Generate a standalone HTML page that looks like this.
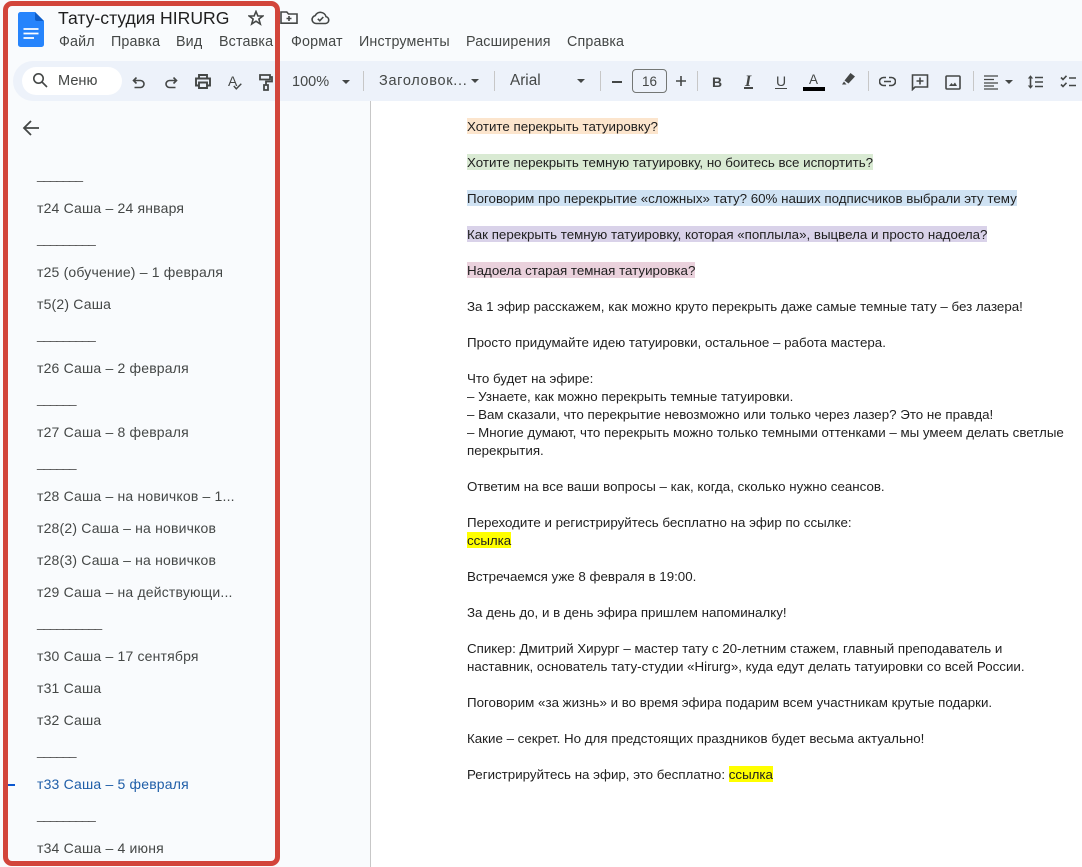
<!DOCTYPE html>
<html lang="ru"><head><meta charset="utf-8"><title>Тату-студия HIRURG</title>
<style>
html,body{margin:0;padding:0;background:#f9fbfd}
body{position:relative;width:1082px;height:867px;overflow:hidden;font-family:"Liberation Sans","Noto Sans CJK SC",sans-serif;color:#444746}
.a{position:absolute;white-space:nowrap}
#page{position:absolute;left:371px;top:101px;width:711px;height:766px;background:#fff}
#vl{position:absolute;left:370px;top:101px;width:1px;height:766px;background:#c7c7c7}
#bar{position:absolute;left:13px;top:61px;width:1069px;height:40px;background:#edf2fa;border-radius:20px 0 0 20px}
#search{position:absolute;left:22px;top:67px;width:100px;height:28px;border-radius:14px;background:#fff}
.m{top:34px;font-size:14.3px;line-height:16px;letter-spacing:.15px;color:#444746}
.t{font-size:14px;line-height:16px;color:#444746}
.s{position:absolute;left:37px;font-size:14px;line-height:18px;letter-spacing:.18px;color:#444746;white-space:nowrap}
.u{font-size:13.5px;letter-spacing:-1.1px;color:#555}
.d{position:absolute;left:467px;font-size:13.33px;line-height:18px;height:16px;margin-top:1px;color:#1f1f1f;white-space:nowrap}
.d span{display:inline-block;height:16px;vertical-align:top}
.sep{position:absolute;top:71px;width:1px;height:20px;background:#c7c7c7}
svg.i{position:absolute;fill:none;stroke:#444746;stroke-width:1.6}
#red{position:absolute;left:3px;top:1px;width:267px;height:855px;border:5px solid #d2453b;border-radius:9px;background:transparent}
</style></head><body>
<div id="page"></div><div id="vl"></div><div id="bar"></div><div id="search"></div>

<svg class="a" style="left:18px;top:12px" width="26" height="35" viewBox="0 0 26 35"><path d="M2.5 0H17L26 9V32.500A2.500 2.500 0 0 1 23.500 35H2.500A2.500 2.500 0 0 1 0 32.500V2.500A2.500 2.500 0 0 1 2.500 0Z" fill="#2684fc"/><path d="M17 0L26 9H19A2 2 0 0 1 17 7Z" fill="#0f5ec9"/><path d="M5.500 17H20.500M5.500 21.500H20.500M5.500 26H16" stroke="#fff" stroke-width="1.700"/></svg>

<div class="a" style="left:58px;top:7px;font-size:17.6px;line-height:22px;color:#1f1f1f">Тату-студия HIRURG</div>
<svg class="i" style="left:248px;top:10px" width="16" height="16" viewBox="0 0 16 16"><path d="M8 1.500L9.900 6H14.800L10.900 9L12.300 14L8 11.200L3.700 14L5.100 9L1.200 6H6.100Z"/></svg>
<svg class="i" style="left:280px;top:11px" width="18" height="14" viewBox="0 0 18 14"><path d="M1 3V12.200H17V3H8.500L6.800 1H1V3M9 5V10M6.500 7.500H11.500"/></svg>
<svg class="i" style="left:311px;top:11px" width="19" height="14" viewBox="0 0 19 14"><path d="M5 12.500H14.500A3.500 3.500 0 0 0 15 5.600A5.800 5.800 0 0 0 4.200 4.600A4 4 0 0 0 5 12.500ZM6.800 7.800L8.800 9.700L12.300 6"/></svg>

<div class="a m" style="left:59px">Файл</div><div class="a m" style="left:111px">Правка</div><div class="a m" style="left:176px">Вид</div><div class="a m" style="left:219px">Вставка</div><div class="a m" style="left:291px">Формат</div><div class="a m" style="left:359px">Инструменты</div><div class="a m" style="left:466px">Расширения</div><div class="a m" style="left:567px">Справка</div>

<svg class="i" style="left:32px;top:72px" width="16" height="16" viewBox="0 0 16 16"><circle cx="6.500" cy="6.500" r="4.700"/><path d="M10 10L15 15"/></svg>
<div class="a t" style="left:58px;top:73px;font-size:14.6px">Меню</div>
<svg class="i" style="left:132px;top:77px" width="14" height="12" viewBox="0 0 14 12"><path d="M4.500 .5L1.500 3.500L4.500 6.500M1.500 3.500H8.500A3.500 3.500 0 0 1 8.500 10.500H2.500"/></svg>
<svg class="i" style="left:164px;top:77px" width="14" height="12" viewBox="0 0 14 12"><path d="M9.500 .5L12.500 3.500L9.500 6.500M12.500 3.500H5.500A3.500 3.500 0 0 0 5.500 10.500H11.500"/></svg>
<svg class="i" style="left:195px;top:74px" width="16" height="15" viewBox="0 0 16 15"><path d="M4 4V1H12V4M4 11.500H1V4.500H15V11.500H12M4 8.500H12V14H4Z" stroke-width="1.900"/></svg>
<div class="a" style="left:228px;top:73px;font-size:14px;line-height:16px">A</div>
<svg class="i" style="left:233px;top:83px" width="9" height="7" viewBox="0 0 9 7"><path d="M.8 3L3.300 5.800L8.300 .8" stroke-width="1.400"/></svg>
<svg class="i" style="left:259px;top:74px" width="14" height="17" viewBox="0 0 14 17"><path d="M1 1H11V5.500H1ZM11 3H13V7.500H7V11M5 11H9V16H5Z" stroke-width="1.800"/></svg>

<div class="a t" style="left:292px;top:74px;font-size:14.5px">100%</div>
<div class="a" style="left:342px;top:80px;border:4px solid transparent;border-top:4.500px solid #444746;border-bottom:0"></div>
<div class="sep" style="left:363px"></div>
<div class="a t" style="left:379px;top:73px;font-size:14.5px;letter-spacing:.68px">Заголовок...</div>
<div class="a" style="left:471px;top:79px;border:4px solid transparent;border-top:4.500px solid #444746;border-bottom:0"></div>
<div class="sep" style="left:494px"></div>
<div class="a t" style="left:510px;top:73px;font-size:15.3px">Arial</div>
<div class="a" style="left:577px;top:79px;border:4px solid transparent;border-top:4.500px solid #444746;border-bottom:0"></div>
<div class="sep" style="left:600px"></div>
<div class="a" style="left:612px;top:81px;width:10px;height:1.500px;background:#444746"></div>
<div class="a" style="left:632px;top:69px;width:33px;height:22px;border:1px solid #747775;border-radius:4px;text-align:center;font-size:13.500px;line-height:23px;color:#444746">16</div>
<svg class="i" style="left:675px;top:75px" width="12" height="12" viewBox="0 0 12 12"><path d="M1 6H11M6 1V11"/></svg>
<div class="sep" style="left:697px"></div>
<div class="a" style="left:712px;top:74px;font-size:14px;line-height:16px;font-weight:bold">B</div>
<div class="a" style="left:745px;top:74px;font-size:16px;line-height:16px;font-weight:bold;font-style:italic;font-family:'Liberation Serif',serif">I</div>
<div class="a" style="left:744px;top:87px;width:9px;height:1.500px;background:#444746"></div>
<div class="a" style="left:776px;top:73px;font-size:14px;line-height:16px;">U</div><div class="a" style="left:775px;top:87.500px;width:12px;height:1.500px;background:#444746"></div>
<div class="a" style="left:809px;top:72px;font-size:13.500px;line-height:16px">A</div><div class="a" style="left:803px;top:87px;width:22px;height:4px;background:#000"></div>
<svg class="a" style="left:841px;top:72px" width="15" height="14" viewBox="0 0 15 14"><path d="M9.500 1L14 4.500L7.500 11.500L3.500 8.500Z" fill="#444746"/><path d="M3 9.500L1 12.500H5.500Z" fill="#444746"/></svg>
<div class="sep" style="left:868px"></div>
<svg class="i" style="left:879px;top:76px" width="17" height="11" viewBox="0 0 17 11"><path d="M7 1.500H4.500A3.800 3.800 0 0 0 4.500 9.500H7M10 1.500H12.500A3.800 3.800 0 0 1 12.500 9.500H10M5 5.500H12"/></svg>
<svg class="i" style="left:911px;top:74px" width="18" height="17" viewBox="0 0 18 17"><path d="M1.500 1H16.500V13H4L1.500 15.500ZM9 3.500V10.500M5.500 7H12.500"/></svg>
<svg class="i" style="left:945px;top:75px" width="16" height="15" viewBox="0 0 16 15"><path d="M2 1H14A1 1 0 0 1 15 2V13A1 1 0 0 1 14 14H2A1 1 0 0 1 1 13V2A1 1 0 0 1 2 1Z"/><path d="M4 11L6.500 8L8 9.800L10 7.500L12 11Z" fill="#444746" stroke="none"/></svg>
<div class="sep" style="left:973px"></div>
<svg class="i" style="left:984px;top:75px" width="15" height="15" viewBox="0 0 15 15"><path d="M0 1H14M0 4.500H10M0 8H14M0 11H10M0 14H14" stroke-width="1.300"/></svg>
<div class="a" style="left:1005px;top:80px;border:4px solid transparent;border-top:4.500px solid #444746;border-bottom:0"></div>
<svg class="i" style="left:1027px;top:75px" width="17" height="14" viewBox="0 0 17 14"><path d="M3.500 2V12M8 2.500H16M8 7H16M8 11.500H16"/><path d="M.8 3.500L3.500 .2L6.200 3.500ZM.8 10.500L3.500 13.800L6.200 10.500Z" fill="#444746" stroke="none"/></svg>
<svg class="i" style="left:1060px;top:75px" width="17" height="14" viewBox="0 0 17 14"><path d="M1 2.500L3 4.500L6.500 .8M1 9.500L3 11.500L6.500 7.800M9 3H16M9 10.500H16"/></svg>

<svg class="a" style="left:22px;top:119px" width="18" height="18" viewBox="0 0 18 18"><path d="M17 9H2.500M9 2L2 9L9 16" fill="none" stroke="#444746" stroke-width="1.800"/></svg>

<div class="s u" style="top:166px">_______</div>
<div class="s" style="top:199px">т24 Саша – 24 января</div>
<div class="s u" style="top:230px">_________</div>
<div class="s" style="top:263px">т25 (обучение) – 1 февраля</div>
<div class="s" style="top:295px">т5(2) Саша</div>
<div class="s u" style="top:326px">_________</div>
<div class="s" style="top:359px">т26 Саша – 2 февраля</div>
<div class="s u" style="top:390px">______</div>
<div class="s" style="top:423px">т27 Саша – 8 февраля</div>
<div class="s u" style="top:454px">______</div>
<div class="s" style="top:487px">т28 Саша – на новичков – 1...</div>
<div class="s" style="top:519px">т28(2) Саша – на новичков</div>
<div class="s" style="top:551px">т28(3) Саша – на новичков</div>
<div class="s" style="top:583px">т29 Саша – на действующи...</div>
<div class="s u" style="top:614px">__________</div>
<div class="s" style="top:647px">т30 Саша – 17 сентября</div>
<div class="s" style="top:679px">т31 Саша</div>
<div class="s" style="top:711px">т32 Саша</div>
<div class="s u" style="top:742px">______</div>
<div class="a" style="left:7px;top:784px;width:8px;height:1.500px;background:#0b57d0"></div>
<div class="s" style="top:775px;color:#1f5ea8">т33 Саша – 5 февраля</div>
<div class="s u" style="top:806px">_________</div>
<div class="s" style="top:839px">т34 Саша – 4 июня</div>

<div id="red"></div>

<div class="d" style="top:117px"><span style="background:#fce5cd">Хотите перекрыть татуировку?</span></div>
<div class="d" style="top:153px"><span style="background:#d9ead3">Хотите перекрыть темную татуировку, но боитесь все испортить?</span></div>
<div class="d" style="top:189px"><span style="background:#cfe2f3">Поговорим про перекрытие «сложных» тату? 60% наших подписчиков выбрали эту тему</span></div>
<div class="d" style="top:225px"><span style="background:#d9d2e9">Как перекрыть темную татуировку, которая «поплыла», выцвела и просто надоела?</span></div>
<div class="d" style="top:261px"><span style="background:#ead1dc">Надоела старая темная татуировка?</span></div>
<div class="d" style="top:297px">За 1 эфир расскажем, как можно круто перекрыть даже самые темные тату – без лазера!</div>
<div class="d" style="top:333px">Просто придумайте идею татуировки, остальное – работа мастера.</div>
<div class="d" style="top:369px">Что будет на эфире:</div>
<div class="d" style="top:387px">– Узнаете, как можно перекрыть темные татуировки.</div>
<div class="d" style="top:405px">– Вам сказали, что перекрытие невозможно или только через лазер? Это не правда!</div>
<div class="d" style="top:423px">– Многие думают, что перекрыть можно только темными оттенками – мы умеем делать светлые</div>
<div class="d" style="top:441px">перекрытия.</div>
<div class="d" style="top:477px">Ответим на все ваши вопросы – как, когда, сколько нужно сеансов.</div>
<div class="d" style="top:513px">Переходите и регистрируйтесь бесплатно на эфир по ссылке:</div>
<div class="d" style="top:531px"><span style="background:#ffff00">ссылка</span></div>
<div class="d" style="top:567px">Встречаемся уже 8 февраля в 19:00.</div>
<div class="d" style="top:603px">За день до, и в день эфира пришлем напоминалку!</div>
<div class="d" style="top:639px">Спикер: Дмитрий Хирург – мастер тату с 20-летним стажем, главный преподаватель и</div>
<div class="d" style="top:657px">наставник, основатель тату-студии «Hirurg», куда едут делать татуировки со всей России.</div>
<div class="d" style="top:693px">Поговорим «за жизнь» и во время эфира подарим всем участникам крутые подарки.</div>
<div class="d" style="top:729px">Какие – секрет. Но для предстоящих праздников будет весьма актуально!</div>
<div class="d" style="top:765px">Регистрируйтесь на эфир, это бесплатно: <span style="background:#ffff00">ссылка</span></div>
</body></html>
